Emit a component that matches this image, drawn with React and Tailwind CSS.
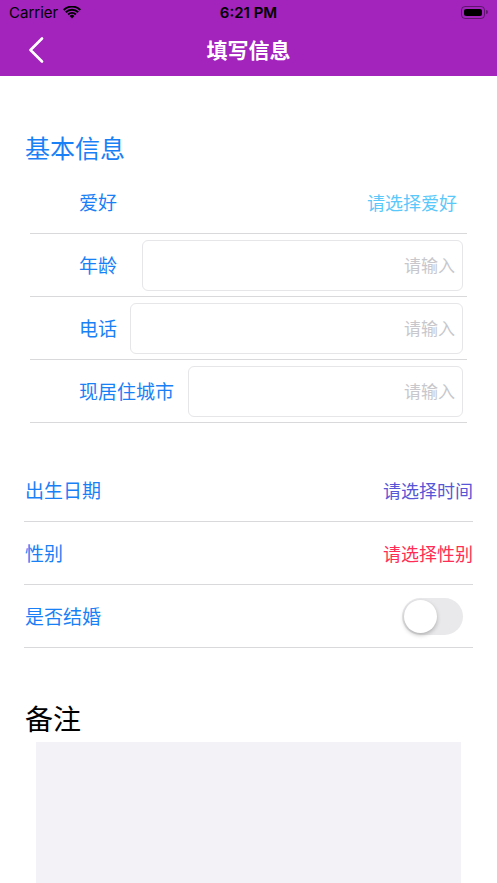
import React from 'react';

const font = { fontFamily: '"Noto Sans CJK SC", "Noto Sans", sans-serif' };

const StatusBar = () => (
    <div className="h-[24px] flex items-center justify-between px-[9px] text-black" style={{ fontFamily: 'Inter, "Liberation Sans", sans-serif' }}>
        <div className="flex items-center gap-[5px] w-[120px]">
            <span className="text-[15px] leading-none">Carrier</span>
            <svg width="18" height="13" viewBox="0 0 18 13">
                <path d="M9 12.5 L6.6 10 A3.4 3.4 0 0 1 11.4 10 Z" fill="#000" />
                <path d="M4.4 7.8 A6.5 6.5 0 0 1 13.6 7.8 L12.2 9.2 A4.5 4.5 0 0 0 5.8 9.2 Z" fill="#000" />
                <path d="M2.1 5.5 A9.8 9.8 0 0 1 15.9 5.5 L14.5 6.9 A7.8 7.8 0 0 0 3.5 6.9 Z" fill="#000" />
                <path d="M0 3.3 A12.8 12.8 0 0 1 18 3.3 L16.6 4.7 A10.8 10.8 0 0 0 1.4 4.7 Z" fill="#000" />
            </svg>
        </div>
        <span className="text-[15px] font-semibold leading-none">6:21 PM</span>
        <div className="w-[120px] flex justify-end">
            <div className="flex items-center">
                <div className="w-[24px] h-[13px] rounded-[4px] border border-black/40 p-[2px]">
                    <div className="w-full h-full rounded-[2px] bg-black" />
                </div>
                <div className="w-[1.5px] h-[4px] bg-black/40 rounded-r-sm ml-[1px]" />
            </div>
        </div>
    </div>
);

const InputRow = ({ label, inputClass }) => (
    <div className="h-[63px] flex items-center border-b border-[#d9d9dc]">
        <span className="ml-[49px] text-[19px] text-[#1a80f6] whitespace-nowrap">{label}</span>
        <div className={`h-[51px] mr-[4px] flex-1 rounded-[6px] border border-[#e6e6e9] flex items-center justify-end pr-[7px] text-[17px] text-[#c7c7cc] ${inputClass}`}>
            请输入
        </div>
    </div>
);

const PickRow = ({ label, value, valueClass, children }) => (
    <div className="h-[63px] flex items-center justify-between border-b border-[#d9d9dc]">
        <span className="text-[19px] text-[#1a80f6] ml-[1px]">{label}</span>
        {value ? <span className={`text-[18px] ${valueClass}`}>{value}</span> : children}
    </div>
);

const App = () => {
    return (
        <div className="w-[497px] h-[883px] overflow-hidden bg-white" style={font}>
            <div className="bg-[#a224bd]">
                <StatusBar />
                <div className="h-[52px] relative flex items-center justify-center">
                    <svg className="absolute left-[28px] top-[13px]" width="16" height="26" viewBox="0 0 16 26">
                        <path d="M14 1.5 L2.5 13 L14 24.5" fill="none" stroke="#fff" strokeWidth="2.6" strokeLinecap="round" strokeLinejoin="round" />
                    </svg>
                    <span className="text-white text-[21px] font-bold">填写信息</span>
                </div>
            </div>

            <div className="pt-[53px] px-[25px]">
                <h2 className="text-[25px] leading-[36px] text-[#1a80f6]">基本信息</h2>
            </div>

            <div className="mt-[6px] ml-[30px] mr-[30px]">
                <div className="h-[63px] flex items-center justify-between border-b border-[#d9d9dc]">
                    <span className="ml-[49px] text-[19px] text-[#1a80f6]">爱好</span>
                    <span className="mr-[10px] text-[18px] text-[#5ac8fa]">请选择爱好</span>
                </div>
                <InputRow label="年龄" inputClass="ml-[25px]" />
                <InputRow label="电话" inputClass="ml-[13px]" />
                <InputRow label="现居住城市" inputClass="ml-[14px]" />
            </div>

            <div className="mt-[36px] mx-[24px]">
                <PickRow label="出生日期" value="请选择时间" valueClass="text-[#5856d6]" />
                <PickRow label="性别" value="请选择性别" valueClass="text-[#ff2d55]" />
                <PickRow label="是否结婚">
                    <div className="w-[61px] h-[37px] mr-[10px] rounded-full bg-[#e9e9eb] p-[2px] flex items-center">
                        <div className="w-[33px] h-[33px] rounded-full bg-white shadow-[0_2px_4px_rgba(0,0,0,0.25)]" />
                    </div>
                </PickRow>
            </div>

            <div className="mt-[51px] px-[25px]">
                <h2 className="text-[28px] leading-[38px] text-black">备注</h2>
            </div>
            <div className="mt-[5px] ml-[36px] mr-[36px] h-[160px] bg-[#f2f2f7]" />
        </div>
    );
};

export default App;
